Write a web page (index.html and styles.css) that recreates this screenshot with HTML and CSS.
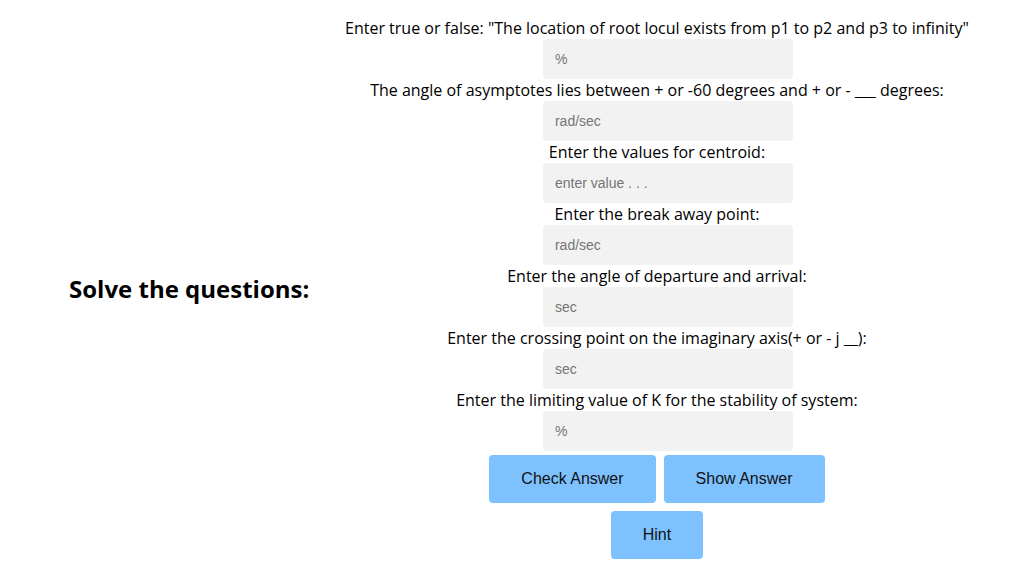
FILE: index.html
```html
<!DOCTYPE html>
<html>
<head>
<meta charset="utf-8">
<link rel="stylesheet" href="styles.css">
</head>
<body>
<div class="page">
  <div class="side">
    <h2 class="title">Solve the questions:</h2>
  </div>
  <div class="quiz">
    <label class="q">Enter true or false: "The location of root locul exists from p1 to p2 and p3 to infinity"</label>
    <input class="field" type="text" placeholder="%">
    <label class="q">The angle of asymptotes lies between + or -60 degrees and + or - ___ degrees:</label>
    <input class="field" type="text" placeholder="rad/sec">
    <label class="q">Enter the values for centroid:</label>
    <input class="field" type="text" placeholder="enter value . . .">
    <label class="q">Enter the break away point:</label>
    <input class="field" type="text" placeholder="rad/sec">
    <label class="q">Enter the angle of departure and arrival:</label>
    <input class="field" type="text" placeholder="sec">
    <label class="q">Enter the crossing point on the imaginary axis(+ or - j __):</label>
    <input class="field" type="text" placeholder="sec">
    <label class="q">Enter the limiting value of K for the stability of system:</label>
    <input class="field" type="text" placeholder="%">
    <div class="actions">
      <button class="btn">Check Answer</button>
      <button class="btn">Show Answer</button>
    </div>
    <div class="actions">
      <button class="btn">Hint</button>
    </div>
  </div>
</div>
</body>
</html>
```
FILE: styles.css
```css
html, body {
  margin: 0;
  padding: 0;
  background: #ffffff;
}
.page {
  display: flex;
  align-items: center;
  padding-top: 17px;
}
.side {
  flex: 0 0 auto;
  width: 276px;
  padding-left: 69px;
  padding-bottom: 4px;
}
.title {
  margin: 0;
  font-family: "Open Sans", sans-serif;
  font-weight: 700;
  font-size: 24px;
  color: #000;
}
.quiz {
  display: flex;
  flex-direction: column;
  align-items: center;
}
.q {
  display: block;
  font-family: "Open Sans", sans-serif;
  font-size: 16px;
  line-height: 22px;
  color: #000;
  white-space: nowrap;
}
.field {
  box-sizing: border-box;
  width: 250px;
  height: 40px;
  margin-left: 22px;
  border: none;
  border-radius: 4px;
  background: #f2f2f2;
  padding: 0 12px;
  font-family: Arial, "Liberation Sans", sans-serif;
  font-size: 14px;
  color: #000;
  outline: none;
}
.field::placeholder {
  color: #757575;
}
.actions {
  display: flex;
  justify-content: center;
}
.btn {
  margin: 4px;
  height: 48px;
  padding: 0 32px;
  border: none;
  border-radius: 4px;
  background: #7dc1ff;
  font-family: Arial, "Liberation Sans", sans-serif;
  font-size: 16px;
  color: #111;
  cursor: pointer;
}
```
